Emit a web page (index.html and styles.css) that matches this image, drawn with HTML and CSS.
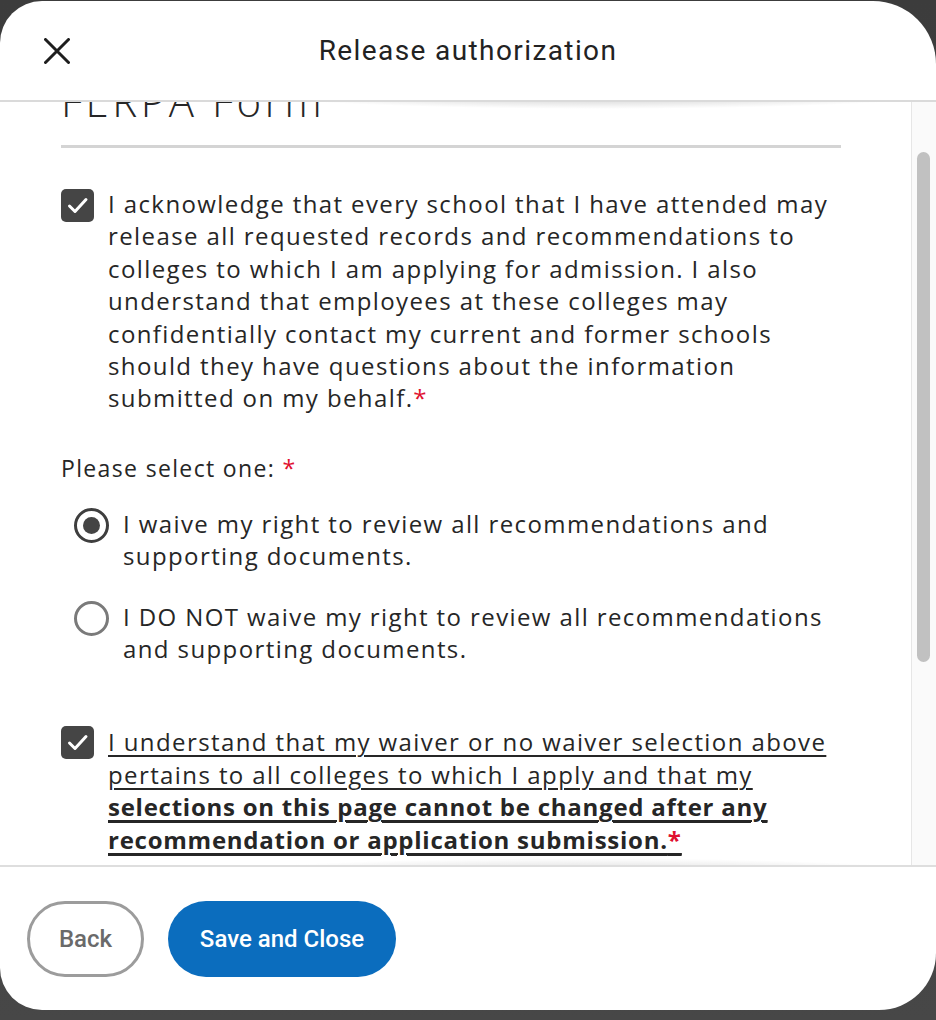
FILE: index.html
```html
<!DOCTYPE html>
<html lang="en">
<head>
<meta charset="utf-8">
<title>Release authorization</title>
<link rel="stylesheet" href="styles.css">
</head>
<body>
<div class="dialog">
  <header class="hdr">
    <button class="close" aria-label="Close">
      <svg width="26" height="26" viewBox="0 0 26 26"><path d="M1.5 1.5 L24.5 24.5 M24.5 1.5 L1.5 24.5" stroke="#1e1e1e" stroke-width="3" stroke-linecap="round" fill="none"/></svg>
    </button>
    <h1 class="title">Release authorization</h1>
  </header>
  <div class="main">
    <div class="scroll">
      <div class="inner">
        <h2 class="form-title">FERPA Form</h2>
        <hr class="rule">
        <label class="check-row">
          <span class="box"><svg width="33" height="33" viewBox="0 0 33 33"><path d="M8.5 17 L14 22.5 L25 10.5" stroke="#fff" stroke-width="3" stroke-linecap="round" stroke-linejoin="round" fill="none"/></svg></span>
          <span class="text">I acknowledge that every school that I have attended may release all requested records and recommendations to colleges to which I am applying for admission. I also understand that employees at these colleges may confidentially contact my current and former schools should they have questions about the information submitted on my behalf.<span class="req">*</span></span>
        </label>
        <p class="prompt">Please select one: <span class="req">*</span></p>
        <div class="radios">
          <label class="radio-row"><span class="radio on"></span><span class="text">I waive my right to review all recommendations and supporting documents.</span></label>
          <label class="radio-row"><span class="radio"></span><span class="text">I DO NOT waive my right to review all recommendations and supporting documents.</span></label>
        </div>
        <label class="check-row confirm">
          <span class="box"><svg width="33" height="33" viewBox="0 0 33 33"><path d="M8.5 17 L14 22.5 L25 10.5" stroke="#fff" stroke-width="3" stroke-linecap="round" stroke-linejoin="round" fill="none"/></svg></span>
          <span class="text">I understand that my waiver or no waiver selection above pertains to all colleges to which I apply and that my <strong>selections on this page cannot be changed after any recommendation or application submission.<span class="req">*</span></strong></span>
        </label>
      </div>
      <div class="shade shade-top"></div>
      <div class="shade shade-bottom"></div>
    </div>
    <div class="track"><div class="thumb"></div></div>
  </div>
  <footer class="ftr">
    <button class="btn back">Back</button>
    <button class="btn save">Save and Close</button>
  </footer>
</div>
</body>
</html>
```

FILE: styles.css
```css
* { box-sizing: border-box; }
html, body { margin: 0; padding: 0; }
body {
  background: linear-gradient(180deg, #3c3c3c 0%, #474747 100%);
  height: 1020px;
  overflow: hidden;
  font-family: "Open Sans", "Liberation Sans", sans-serif;
  color: #262626;
}
.dialog {
  margin-top: 1px;
  height: 1009px;
  width: 936px;
  background: #fff;
  border-radius: 42px 63px 57px 42px;
  display: flex;
  flex-direction: column;
  overflow: hidden;
}
.hdr {
  height: 101px;
  flex: none;
  border-bottom: 2px solid #dadada;
  display: flex;
  align-items: center;
  justify-content: center;
  position: relative;
}
.close {
  position: absolute;
  left: 44px;
  top: 37px;
  width: 26px;
  height: 26px;
  padding: 0;
  border: 0;
  background: none;
  display: block;
}
.close svg { display: block; }
.title {
  margin: 0 0 0 0;
  font-family: Roboto, "Liberation Sans", sans-serif;
  font-weight: 400;
  font-size: 28px;
  color: #222;
  letter-spacing: 1.4px;
}
.main {
  flex: 1;
  display: flex;
  min-height: 0;
}
.scroll {
  flex: 1;
  overflow: hidden;
  position: relative;
}
.inner {
  padding: 0 70px 0 61px;
  margin-top: -25px;
}
.form-title {
  margin: 0;
  font-size: 42px;
  line-height: 48px;
  font-weight: 300;
  letter-spacing: 3.5px;
  color: #262626;
}
.rule {
  margin: 20px 0 0 0;
  border: 0;
  height: 3px;
  background: #d4d4d4;
}
.check-row {
  display: flex;
  align-items: flex-start;
  gap: 14px;
  margin-top: 40px;
}
.box {
  flex: none;
  width: 33px;
  height: 33px;
  border-radius: 5px;
  background: #454545;
  margin-top: 1px;
}
.box svg { display: block; }
.text {
  font-size: 24px;
  line-height: 32.4px;
  font-weight: 500;
  color: #262626;
  letter-spacing: 1.4px;
}
.req { color: #e0102f; }
.prompt {
  margin: 38px 0 0 0;
  font-size: 23px;
  line-height: 30px;
  font-weight: 500;
  letter-spacing: 1.35px;
  color: #262626;
}
.radios {
  padding-left: 13px;
  margin-top: 25px;
  display: flex;
  flex-direction: column;
  gap: 28px;
}
.radio-row {
  display: flex;
  align-items: flex-start;
  gap: 14px;
}
.radio {
  flex: none;
  width: 35px;
  height: 35px;
  border-radius: 50%;
  border: 3px solid #7a7a7a;
  margin-top: 0;
  display: flex;
  align-items: center;
  justify-content: center;
}
.radio.on { border-color: #3e3e3e; }
.radio.on::after {
  content: "";
  width: 17px;
  height: 17px;
  border-radius: 50%;
  background: #444;
}
.confirm { margin-top: 61px; }
.confirm .box { margin-top: 0; }
.confirm .text {
  text-decoration: underline;
  text-decoration-thickness: 1.5px;
  text-underline-offset: 4px;
}
.confirm strong {
  font-weight: 700;
  letter-spacing: 0.75px;
  text-decoration: underline;
  text-decoration-thickness: 2.5px;
  text-underline-offset: 4px;
}
.shade {
  position: absolute;
  left: 0;
  right: 0;
  height: 46px;
  pointer-events: none;
}
.shade-top {
  top: -16px;
  background: radial-gradient(ellipse 44% 50% at 66% 0%, rgba(0,0,0,0.34), rgba(0,0,0,0) 100%);
}
.shade-bottom {
  bottom: -16px;
  background: radial-gradient(ellipse 46% 50% at 64% 100%, rgba(0,0,0,0.24), rgba(0,0,0,0) 100%);
}
.track {
  flex: none;
  width: 25px;
  background: #fafafa;
  border-left: 1px solid #e6e6e6;
  padding: 50px 0 0 5px;
}
.thumb {
  width: 13px;
  height: 510px;
  border-radius: 7px;
  background: #c1c1c1;
}
.ftr {
  flex: none;
  height: 145px;
  border-top: 2px solid #dedede;
  padding: 34px 0 0 27px;
  display: flex;
  align-items: flex-start;
  gap: 24px;
}
.btn {
  height: 76px;
  border-radius: 38px;
  font-family: Roboto, "Liberation Sans", sans-serif;
  font-size: 24px;
  font-weight: 500;
  cursor: pointer;
}
.back {
  width: 117px;
  background: #fff;
  border: 3px solid #9c9c9c;
  color: #6a6a6a;
}
.save {
  width: 228px;
  background: #0b6dbe;
  border: 0;
  color: #fff;
}
```
